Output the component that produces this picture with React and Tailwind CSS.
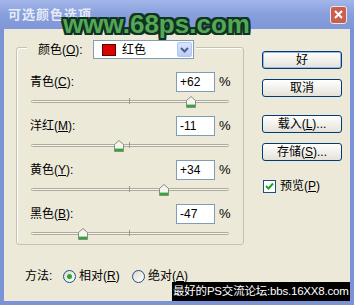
import React from "react";

const UI = "font-['Liberation_Sans','Noto_Sans_CJK_SC',sans-serif]";

const rows = [
  { name: "青色", key: "C", value: "+62", v: 62 },
  { name: "洋红", key: "M", value: "-11", v: -11 },
  { name: "黄色", key: "Y", value: "+34", v: 34 },
  { name: "黑色", key: "B", value: "-47", v: -47 },
];

function Thumb() {
  return (
    <svg width="10" height="12" viewBox="0 0 10 12">
      <path d="M0.5 4.5 L5 0.5 L9.5 4.5 V11.5 H0.5 Z" fill="#f4f5ee" stroke="#8a8c80" />
      <rect x="1" y="8.6" width="8" height="2.4" fill="#2fa83a" />
    </svg>
  );
}

function Slider({ v }) {
  const pos = 99 + v * 0.99;
  return (
    <div className="relative ml-[1px] h-[20px] w-[198px] pt-[8px]">
      <div className="h-[3px] rounded-[2px] border border-[#aeab9c] bg-[#f4f3ee]" />
      <div className="absolute left-[98px] top-[6px] h-[6px] w-px bg-[#9f9c8e]" />
      <div className="absolute top-[4px]" style={{ left: pos - 5 }}>
        <Thumb />
      </div>
    </div>
  );
}

function Btn({ children, primary }) {
  return (
    <div
      className={
        primary
          ? "flex h-[18px] w-[80px] items-center justify-center rounded-[3px] border border-[#003c74] bg-linear-to-b from-white to-[#e4e2d8] text-[12px] text-black shadow-[inset_0_0_0_1px_#9db5ea]"
          : "flex h-[18px] w-[80px] items-center justify-center rounded-[3px] border border-[#003c74] bg-linear-to-b from-white to-[#e4e2d8] text-[12px] text-black"
      }
    >
      {children}
    </div>
  );
}

function Radio({ on }) {
  return (
    <div className="flex h-[13px] w-[13px] items-center justify-center rounded-full border border-[#1c5180] bg-linear-to-br from-[#dcdad0] to-white">
      {on && <div className="h-[5px] w-[5px] rounded-full bg-[#2aa62a]" />}
    </div>
  );
}

export default function App() {
  return (
    <div className={`relative flex h-[305px] w-[354px] flex-col overflow-hidden bg-[#7b92d6] ${UI}`}>
      {/* title bar */}
      <div className="flex h-[29px] items-center bg-linear-to-b from-[#a3b6ea] via-[#889fdc] to-[#7f97d8] pl-[8px] pr-[7px]">
        <span className="text-[13px] font-bold tracking-[1px] text-[#e6ebf8]">可选颜色选项</span>
        <div className="ml-auto flex h-[18px] w-[17px] items-center justify-center rounded-[3px] border border-[#f2e4e0] bg-[#c8604f]">
          <svg width="9" height="9" viewBox="0 0 9 9">
            <path d="M1 1 L8 8 M8 1 L1 8" stroke="white" strokeWidth="2" />
          </svg>
        </div>
      </div>

      {/* body */}
      <div className="mx-[4px] mb-[4px] flex flex-1 bg-[#ece9d8] text-[12px] text-black">
        <div className="pl-[12px] pt-[18px]">
          <div className="h-[198px] w-[228px] rounded-[3px] border border-[#c5c2b2] pl-[13px] pr-[11px] shadow-[inset_1px_1px_0_#fff]">
            <div className="-ml-[3px] -mt-[8px] flex w-fit items-center bg-[#ece9d8] pl-[11px] pr-[2px]">
              <span className="w-[55px]">
                颜色(<span className="underline">O</span>):
              </span>
              <div className="flex h-[19px] w-[101px] items-center border border-[#7f9db9] bg-white">
                <div className="ml-[8px] h-[12px] w-[14px] border border-[#5a0000] bg-[#dd0000]" />
                <span className="ml-[6px]">红色</span>
                <div className="ml-auto mr-[1px] flex h-[15px] w-[15px] items-center justify-center rounded-[2px] border border-[#b3c5f2] bg-linear-to-b from-[#dbe5fd] to-[#b9cbf8]">
                  <svg width="9" height="6" viewBox="0 0 9 6">
                    <path d="M1 1 L4.5 4.5 L8 1" fill="none" stroke="#4d6185" strokeWidth="2" />
                  </svg>
                </div>
              </div>
            </div>

            <div className="mt-[13px] flex flex-col gap-[4px]">
              {rows.map((r) => (
                <div key={r.key}>
                  <div className="flex h-[20px] items-center">
                    <span>
                      {r.name}(<span className="underline">{r.key}</span>):
                    </span>
                    <div className="ml-auto flex h-[20px] w-[39px] items-center border border-[#7f9db9] bg-white pl-[3px]">
                      {r.value}
                    </div>
                    <span className="ml-[4px] w-[13px] text-[13px]">%</span>
                  </div>
                  <Slider v={r.v} />
                </div>
              ))}
            </div>
          </div>

          <div className="mt-[23px] flex h-[16px] items-center pl-[9px]">
            <span className="w-[38px]">方法:</span>
            <div className="flex w-[69px] items-center">
              <Radio on />
              <span className="ml-[3px]">
                相对(<span className="underline">R</span>)
              </span>
            </div>
            <div className="flex items-center">
              <Radio />
              <span className="ml-[3px]">
                绝对(<span className="underline">A</span>)
              </span>
            </div>
          </div>
        </div>

        <div className="ml-[18px] flex flex-col pt-[22px]">
          <Btn primary>好</Btn>
          <div className="mt-[10px]">
            <Btn>取消</Btn>
          </div>
          <div className="mt-[18px]">
            <Btn>
              载入(<span className="underline">L</span>)...
            </Btn>
          </div>
          <div className="mt-[10px]">
            <Btn>
              存储(<span className="underline">S</span>)...
            </Btn>
          </div>
          <div className="ml-[1px] mt-[16px] flex items-center">
            <div className="flex h-[13px] w-[13px] items-center justify-center border border-[#1c5180] bg-white">
              <svg width="9" height="8" viewBox="0 0 9 8">
                <path d="M1 4 L3.5 6.5 L8 1.5" fill="none" stroke="#21a121" strokeWidth="2" />
              </svg>
            </div>
            <span className="ml-[4px]">
              预览(<span className="underline">P</span>)
            </span>
          </div>
        </div>
      </div>

      {/* site watermarks over the screenshot */}
      <div className="absolute left-[63px] top-[11px] font-['Liberation_Sans',sans-serif] text-[26px] font-bold leading-none text-[#55a655] [text-shadow:2px_0_#0e3322,-2px_0_#0e3322,0_2px_#0e3322,0_-2px_#0e3322,2px_2px_#0e3322,-2px_-2px_#0e3322,2px_-2px_#0e3322,-2px_2px_#0e3322]">
        www.68ps.com
      </div>
      <div className="absolute left-[172px] top-[282px] flex h-[19px] w-[178px] items-center overflow-hidden whitespace-nowrap bg-black pl-[1px] text-[11.5px] tracking-[-0.2px] text-white">
        最好的PS交流论坛:bbs.16XX8.com
      </div>
    </div>
  );
}
